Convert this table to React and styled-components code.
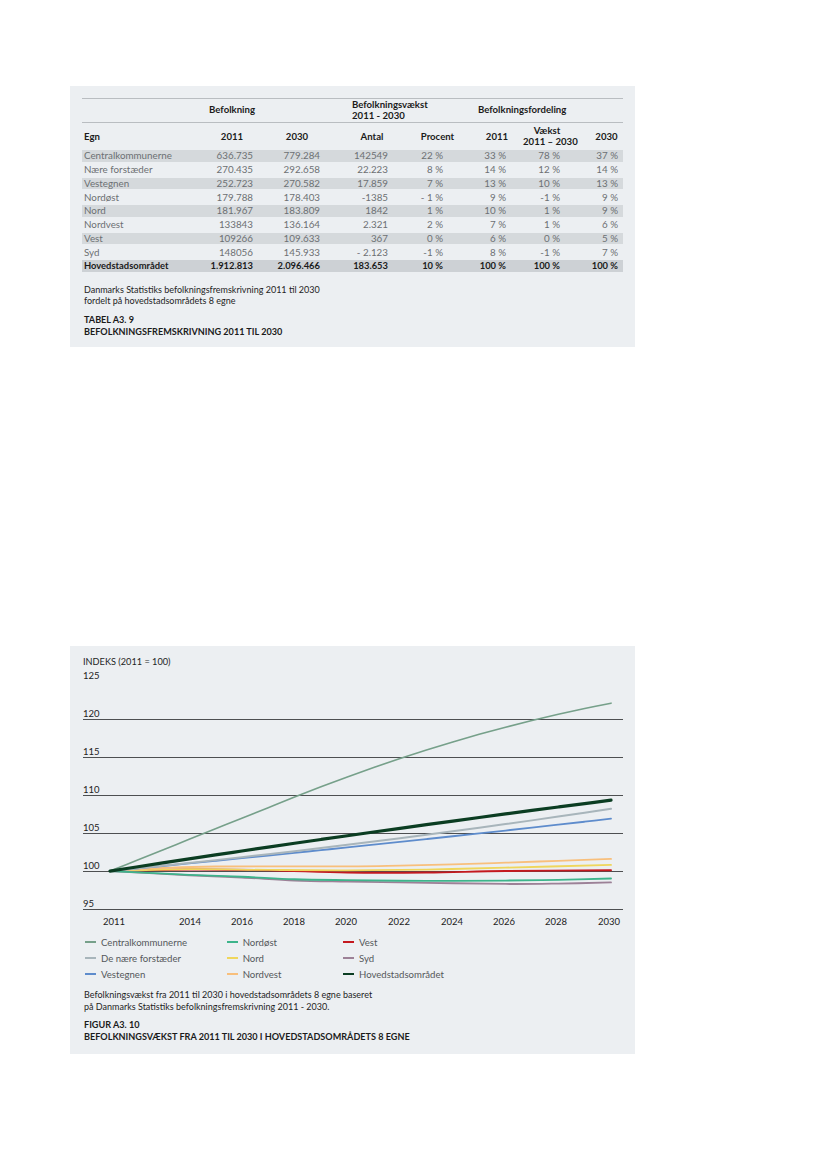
import React from 'react';
import styled, { createGlobalStyle } from 'styled-components';

const GlobalStyle = createGlobalStyle`
  html, body { margin: 0; padding: 0; background: #ffffff; }
  body { font-family: Lato, "Noto Sans", sans-serif; color: #1e1e1e; }
`;

const Page = styled.div`
  display: flex;
  flex-direction: column;
  gap: 299px;
  padding: 86px 0 0 70px;
`;

const Panel = styled.section`
  width: 565px;
  box-sizing: border-box;
  background: #eceff2;
  padding: ${(p) => p.$pad};
`;

const COLS = '118px 64px 68px 73px 62px 56px 55px 45px';

const Table = styled.div`
  border-top: 1px solid #b9bdc1;
`;

const GroupRow = styled.div`
  display: grid;
  grid-template-columns: ${COLS};
  height: 24px;
  box-sizing: border-box;
  border-bottom: 1px solid #b9bdc1;
  align-items: center;
`;

const GroupCell = styled.div`
  grid-column: ${(p) => p.$col};
  font-size: 9.6px;
  font-weight: 700;
  line-height: 10.5px;
  color: #1b1b1b;
  white-space: nowrap;
  text-align: ${(p) => p.$align || 'left'};
  padding-left: ${(p) => p.$pl || 0}px;
`;

const HeadRow = styled.div`
  display: grid;
  grid-template-columns: ${COLS};
  height: 26px;
  align-items: center;
`;

const HeadCell = styled.div`
  font-size: 9.6px;
  font-weight: 700;
  line-height: 11px;
  color: #1b1b1b;
  white-space: nowrap;
  text-align: ${(p) => (p.$first ? 'left' : 'center')};
  padding-left: ${(p) => p.$pl || 0}px;
  padding-right: ${(p) => p.$pr || 0}px;
`;

const BodyRow = styled.div`
  display: grid;
  grid-template-columns: ${COLS};
  height: 13.75px;
  box-sizing: border-box;
  align-items: center;
  border-top: 1px solid transparent;
  border-bottom: 1px solid transparent;
  background-clip: padding-box;
  background-color: ${(p) => (p.$total ? '#cdd1d5' : p.$shade ? '#d5d9dc' : 'transparent')};
`;

const Cell = styled.div`
  font-size: ${(p) => (p.$total ? '9.4px' : '9.8px')};
  font-weight: ${(p) => (p.$total ? 700 : 400)};
  color: ${(p) => (p.$total ? '#1b1b1b' : '#6c7073')};
  line-height: 11px;
  white-space: nowrap;
  text-align: ${(p) => (p.$first ? 'left' : 'right')};
  padding-left: ${(p) => (p.$first ? 2 : 0)}px;
  padding-right: ${(p) => p.$pr || 0}px;
`;

const Caption = styled.div`
  margin-top: ${(p) => p.$mt}px;
  font-size: 9px;
  line-height: ${(p) => p.$lh}px;
  color: #1e1e1e;
  padding-left: 2px;
`;

const CaptionTitle = styled.div`
  margin-top: ${(p) => p.$mt}px;
  font-size: 9.1px;
  font-weight: 700;
  line-height: ${(p) => p.$lh}px;
  color: #1b1b1b;
  text-transform: uppercase;
  padding-left: 2px;
`;

const IndexLabel = styled.div`
  font-size: 9.2px;
  line-height: 12px;
  color: #1e1e1e;
  padding-left: 1px;
`;

const ChartSvg = styled.svg`
  display: block;
  width: 541px;
  height: 266px;
  overflow: visible;
`;

const Legend = styled.div`
  display: grid;
  grid-template-columns: 141.7px 116.3px 1fr;
  grid-template-rows: repeat(3, 16px);
  grid-auto-flow: column;
  padding-left: 3px;
`;

const LegendItem = styled.div`
  display: flex;
  align-items: center;
  gap: 5px;
  font-size: 9.6px;
  font-weight: 400;
  color: #55585b;
  white-space: nowrap;
`;

const Swatch = styled.span`
  width: 11px;
  height: 2px;
  background: ${(p) => p.$color};
  flex: none;
`;

/* ---------- table data ---------- */
const PR = [0, 11, 12, 17, 24, 17, 18, 5];
const rows = [
  ['Centralkommunerne', '636.735', '779.284', '142549', '22 %', '33 %', '78 %', '37 %'],
  ['Nære forstæder', '270.435', '292.658', '22.223', '8 %', '14 %', '12 %', '14 %'],
  ['Vestegnen', '252.723', '270.582', '17.859', '7 %', '13 %', '10 %', '13 %'],
  ['Nordøst', '179.788', '178.403', '-1385', '- 1 %', '9 %', '-1 %', '9 %'],
  ['Nord', '181.967', '183.809', '1842', '1 %', '10 %', '1 %', '9 %'],
  ['Nordvest', '133843', '136.164', '2.321', '2 %', '7 %', '1 %', '6 %'],
  ['Vest', '109266', '109.633', '367', '0 %', '6 %', '0 %', '5 %'],
  ['Syd', '148056', '145.933', '- 2.123', '-1 %', '8 %', '-1 %', '7 %'],
];
const total = ['Hovedstadsområdet', '1.912.813', '2.096.466', '183.653', '10 %', '100 %', '100 %', '100 %'];

/* ---------- chart data ---------- */
const X = (yr) => 28 + 26.37 * (yr - 2011);
const Y = (v) => 203.05 - 7.6 * (v - 100);
const years = Array.from({ length: 20 }, (_, i) => 2011 + i);
const fromFn = (fn) => years.map((yr) => [yr, fn(yr - 2011)]);
const centralFn = (t) => (t <= 7 ? 100 + 1.39 * t : 109.73 + 1.39 * (t - 7) - 0.03 * (t - 7) * (t - 7));

const series = [
  { name: 'Vest', color: '#c4191f', w: 1.9, pts: [[2011, 100], [2014, 100.2], [2017, 100.1], [2020, 99.8], [2023, 99.8], [2026, 100.0], [2030, 100.1]] },
  { name: 'Nord', color: '#efd65c', w: 1.8, pts: [[2011, 100], [2014, 100.25], [2017, 100.15], [2020, 100.1], [2023, 100.2], [2026, 100.45], [2030, 100.8]] },
  { name: 'Nordvest', color: '#f8bf7c', w: 1.8, pts: [[2011, 100], [2013, 100.4], [2015, 100.6], [2020, 100.62], [2022, 100.72], [2024, 100.87], [2026, 101.1], [2028, 101.35], [2030, 101.6]] },
  { name: 'Syd', color: '#9c8197', w: 1.8, pts: [[2011, 100], [2014, 99.45], [2016, 99.15], [2018, 98.75], [2020, 98.6], [2023, 98.45], [2026, 98.3], [2028, 98.35], [2030, 98.5]] },
  { name: 'Nordøst', color: '#3db48b', w: 1.8, pts: [[2011, 100], [2014, 99.5], [2016, 99.25], [2018, 98.92], [2020, 98.8], [2023, 98.7], [2026, 98.75], [2028, 98.85], [2030, 99.02]] },
  { name: 'Vestegnen', color: '#5e8ccc', w: 1.8, pts: fromFn((t) => 100 + 0.33 * t + 0.0017 * t * t) },
  { name: 'De nære forstæder', color: '#a8b5bb', w: 2, pts: fromFn((t) => 100 + 0.34 * t + 0.0048 * t * t) },
  { name: 'Centralkommunerne', color: '#76a08a', w: 1.6, pts: fromFn(centralFn) },
  { name: 'Hovedstadsområdet', color: '#0b3d22', w: 3.2, pts: fromFn((t) => 100 + 0.54 * t - 0.0026 * t * t) },
];

const legendOrder = [
  ['Centralkommunerne', '#76a08a'],
  ['De nære forstæder', '#a8b5bb'],
  ['Vestegnen', '#5e8ccc'],
  ['Nordøst', '#3db48b'],
  ['Nord', '#efd65c'],
  ['Nordvest', '#f8bf7c'],
  ['Vest', '#c4191f'],
  ['Syd', '#9c8197'],
  ['Hovedstadsområdet', '#0b3d22'],
];

const fx = (n) => n.toFixed(2);
const smoothPath = (pts) => {
  const p = pts.map(([yr, v]) => [X(yr), Y(v)]);
  let d = `M${fx(p[0][0])},${fx(p[0][1])}`;
  for (let i = 0; i < p.length - 1; i++) {
    const p0 = p[i - 1] || p[i];
    const p1 = p[i];
    const p2 = p[i + 1];
    const p3 = p[i + 2] || p2;
    const c1x = p1[0] + (p2[0] - p0[0]) / 6;
    const c1y = p1[1] + (p2[1] - p0[1]) / 6;
    const c2x = p2[0] - (p3[0] - p1[0]) / 6;
    const c2y = p2[1] - (p3[1] - p1[1]) / 6;
    d += ` C${fx(c1x)},${fx(c1y)} ${fx(c2x)},${fx(c2y)} ${fx(p2[0])},${fx(p2[1])}`;
  }
  return d;
};

const gridVals = [120, 115, 110, 105, 100, 95];
const yLabels = [125, 120, 115, 110, 105, 100, 95];
const xLabels = [
  ['2011', 32], ['2014', 108], ['2016', 160], ['2018', 212], ['2020', 264],
  ['2022', 317], ['2024', 370], ['2026', 422], ['2028', 474], ['2030', 527],
];

function PopulationTable() {
  return (
    <Panel $pad="12px 12px 10px">
      <Table>
        <GroupRow>
          <GroupCell $col="2 / 3" $align="center">Befolkning</GroupCell>
          <GroupCell $col="4 / 6" $pl={20}>Befolkningsvækst<br />2011 - 2030</GroupCell>
          <GroupCell $col="6 / 9" $pl={11}>Befolkningsfordeling</GroupCell>
        </GroupRow>
        <HeadRow>
          <HeadCell $first $pl={2}>Egn</HeadCell>
          <HeadCell>2011</HeadCell>
          <HeadCell $pr={2}>2030</HeadCell>
          <HeadCell $pl={7}>Antal</HeadCell>
          <HeadCell $pl={3}>Procent</HeadCell>
          <HeadCell $pl={4}>2011</HeadCell>
          <HeadCell $pr={7}>Vækst<br />2011 – 2030</HeadCell>
          <HeadCell $pl={12}>2030</HeadCell>
        </HeadRow>
        {rows.map((r, i) => (
          <BodyRow key={r[0]} $shade={i % 2 === 0}>
            {r.map((c, j) => (
              <Cell key={j} $first={j === 0} $pr={PR[j]}>{c}</Cell>
            ))}
          </BodyRow>
        ))}
        <BodyRow $total>
          {total.map((c, j) => (
            <Cell key={j} $total $first={j === 0} $pr={PR[j]}>{c}</Cell>
          ))}
        </BodyRow>
      </Table>
      <Caption $mt={11} $lh={11.5}>
        Danmarks Statistiks befolkningsfremskrivning 2011 til 2030<br />
        fordelt på hovedstadsområdets 8 egne
      </Caption>
      <CaptionTitle $mt={7.5} $lh={11.5}>
        Tabel A3. 9<br />
        Befolkningsfremskrivning 2011 til 2030
      </CaptionTitle>
    </Panel>
  );
}

function GrowthChart() {
  return (
    <Panel $pad="10px 12px 11px">
      <IndexLabel>INDEKS (2011 = 100)</IndexLabel>
      <ChartSvg viewBox="0 0 541 266">
        {gridVals.map((v) => (
          <line key={v} x1="0.7" x2="541" y1={Y(v)} y2={Y(v)} stroke="#4d4f51" strokeWidth="1" shapeRendering="crispEdges" />
        ))}
        {yLabels.map((v) => (
          <text key={v} x="1" y={Y(v) - 2.5} fontSize="9.5" fill="#222" fontFamily="Lato, sans-serif">{v}</text>
        ))}
        {series.map((s) => (
          <path key={s.name} d={smoothPath(s.pts)} fill="none" stroke={s.color} strokeWidth={s.w} strokeLinecap="round" strokeLinejoin="round" />
        ))}
        {xLabels.map(([t, x]) => (
          <text key={t} x={x} y="256.75" fontSize="9.5" fill="#222" textAnchor="middle" fontFamily="Lato, sans-serif">{t}</text>
        ))}
      </ChartSvg>
      <Legend>
        {legendOrder.map(([name, color]) => (
          <LegendItem key={name}>
            <Swatch $color={color} />
            {name}
          </LegendItem>
        ))}
      </Legend>
      <Caption $mt={7} $lh={12}>
        Befolkningsvækst fra 2011 til 2030 i hovedstadsområdets 8 egne baseret<br />
        på Danmarks Statistiks befolkningsfremskrivning 2011 - 2030.
      </Caption>
      <CaptionTitle $mt={6} $lh={12}>
        Figur A3. 10<br />
        Befolkningsvækst fra 2011 til 2030 i hovedstadsområdets 8 egne
      </CaptionTitle>
    </Panel>
  );
}

export default function App() {
  return (
    <>
      <GlobalStyle />
      <Page>
        <PopulationTable />
        <GrowthChart />
      </Page>
    </>
  );
}
